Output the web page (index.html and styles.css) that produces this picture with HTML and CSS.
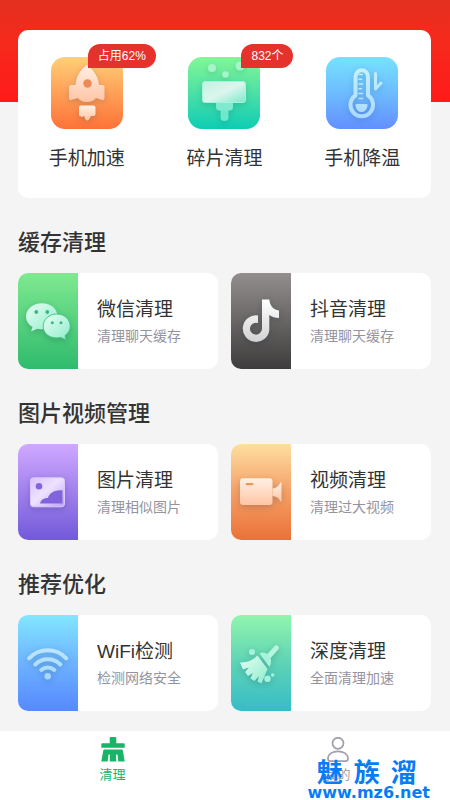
FILE: index.html
```html
<!DOCTYPE html>
<html lang="zh-CN">
<head>
<meta charset="utf-8">
<meta name="viewport" content="width=device-width, initial-scale=1">
<title>手机清理</title>
<link rel="stylesheet" href="styles.css">
</head>
<body>
<svg class="defs" width="0" height="0" aria-hidden="true">
  <defs>
    <linearGradient id="peach" x1="0" y1="0" x2="0" y2="1"><stop offset="0" stop-color="#fff1e4"/><stop offset="1" stop-color="#ffc4a5"/></linearGradient>
    <linearGradient id="mint" x1="0" y1="0" x2="1" y2="1"><stop offset="0" stop-color="#e6fff2"/><stop offset="1" stop-color="#8feccd"/></linearGradient>
    <linearGradient id="plate" x1="0" y1="0" x2="1" y2="1"><stop offset="0" stop-color="#c3f1e1"/><stop offset="0.5" stop-color="#dcf6ed"/><stop offset="1" stop-color="#7de9cc"/></linearGradient>
    <linearGradient id="silver" x1="0" y1="0" x2="0" y2="1"><stop offset="0" stop-color="#ffffff"/><stop offset="1" stop-color="#d2d2d2"/></linearGradient>
    <linearGradient id="lilac" x1="0" y1="0" x2="1" y2="1"><stop offset="0" stop-color="#d9c0ff"/><stop offset="0.45" stop-color="#eee2ff"/><stop offset="1" stop-color="#bda0fa"/></linearGradient>
    <linearGradient id="ice" gradientUnits="userSpaceOnUse" x1="0" y1="12" x2="0" y2="64"><stop offset="0" stop-color="#c6f0ff"/><stop offset="1" stop-color="#a8d8ff"/></linearGradient>
  </defs>
</svg>
<main class="page">
  <section class="tools" aria-label="快捷工具">
    <button class="tool" type="button">
      <span class="tool-icon tool-icon--speed">
        <svg viewBox="0 0 72 72" aria-hidden="true">
          <path fill="url(#peach)" d="M35.700 8C29 13 25 20 24.500 28H20Q18 28 18 30V41Q18 43.500 20 43L27 41Q30 45 35.700 45Q42 45 45 41L51 43Q53.500 43.500 53.500 41V30Q53.500 28 51.500 28H48C47.500 20 43 13 35.700 8Z"/>
          <circle cx="36.500" cy="26.500" r="4.200" fill="#ee8855"/>
          <path fill="url(#peach)" d="M29.500 48.500H42.500Q44.500 48.500 44.500 50.500V57Q44.500 59 42.500 59H40L38 62.500Q36 64.500 34.500 62.500L33 59L31 60L28 58.500V50.500Q28 48.500 29.500 48.500Z"/>
        </svg>
        <span class="badge">占用62%</span>
      </span>
      <span class="tool-name">手机加速</span>
    </button>
    <button class="tool" type="button">
      <span class="tool-icon tool-icon--debris">
        <svg viewBox="0 0 72 72" aria-hidden="true">
          <g fill="#a5f5c8"><circle cx="24" cy="11" r="4"/><circle cx="37.500" cy="17.500" r="3.300"/><circle cx="52" cy="9" r="4.500"/></g>
          <path d="M32.500 50H40.500V60.500Q40.500 64 36.500 64T32.500 60.500Z" fill="#6de8cb"/>
          <path d="M28 44H45V50Q45 53.500 41.500 53.500H31.500Q28 53.500 28 50Z" fill="#7fead0"/>
          <rect x="14.500" y="24.500" width="43" height="21" rx="2.500" fill="url(#plate)" stroke="#a5f5dc"/>
        </svg>
        <span class="badge">832个</span>
      </span>
      <span class="tool-name">碎片清理</span>
    </button>
    <button class="tool" type="button">
      <span class="tool-icon tool-icon--cool">
        <svg viewBox="0 0 72 72" aria-hidden="true">
          <g fill="none" stroke="url(#ice)" stroke-linecap="round" stroke-linejoin="round">
            <path stroke-width="4" d="M29.500 38.500V19.500A6.200 6.200 0 0 1 42 19.500V38.500A11.300 11.300 0 1 1 29.500 38.500Z"/>
            <path stroke-width="1.500" d="M33 17.500H36.500M33 22.200H35.500M33 27H36.500M33 31.800H35.500M33 36.500H36.500M33 41.500H36.500"/>
            <path stroke-width="3" d="M49.500 16.500V32L55 26"/>
          </g>
          <path fill="url(#ice)" d="M30.500 47H40.500Q42 47 41.500 49Q40 55 35.500 55T29.500 49Q29 47 30.500 47Z"/>
        </svg>
      </span>
      <span class="tool-name">手机降温</span>
    </button>
  </section>

  <section class="group">
    <h2>缓存清理</h2>
    <div class="cards">
      <button class="card" type="button">
        <span class="tile tile--wechat">
          <svg viewBox="0 0 60 96" aria-hidden="true">
            <path fill="url(#mint)" d="M24 30.300C15 30.300 8 36 8 43.500C8 48 10.300 51.500 14.500 54L13 58.500L19.500 55.800C33 58.500 39.500 51 39.500 43.500C39.500 36 33 30.300 24 30.300Z"/>
            <path fill="url(#mint)" stroke="#45ca84" d="M38.700 41C31 41 25.200 46.500 25.200 53.300C25.200 60.500 32 66.500 43 64.500L48 66.800L47 62.500C50.500 60 52.200 57 52.200 53.300C52.200 46.500 46.500 41 38.700 41Z"/>
            <g fill="#3bb68a"><circle cx="18.300" cy="39" r="1.900"/><circle cx="29.300" cy="39" r="1.900"/><circle cx="34.300" cy="49.700" r="1.500"/><circle cx="43" cy="49.700" r="1.500"/></g>
          </svg>
        </span>
        <span class="card-text"><span class="card-title">微信清理</span><span class="card-note">清理聊天缓存</span></span>
      </button>
      <button class="card" type="button">
        <span class="tile tile--douyin">
          <svg viewBox="0 0 60 96" aria-hidden="true">
            <path fill="url(#silver)" d="M31 26.500H38.300C38.800 32 42 37 48 37.500V45C44 45 41 43.800 38.300 42V57A13.300 13.300 0 1 1 27 42.500V50A6 6 0 1 0 31 56Z"/>
          </svg>
        </span>
        <span class="card-text"><span class="card-title">抖音清理</span><span class="card-note">清理聊天缓存</span></span>
      </button>
    </div>
  </section>

  <section class="group">
    <h2>图片视频管理</h2>
    <div class="cards">
      <button class="card" type="button">
        <span class="tile tile--photo">
          <svg viewBox="0 0 60 96" aria-hidden="true">
            <rect x="12.500" y="33.800" width="34" height="29" rx="3" fill="url(#lilac)" stroke="#dcc9ff"/>
            <circle cx="21" cy="42.300" r="3.300" fill="#8565de"/>
            <path fill="#8163dc" d="M22 59.500C23 55.500 26 54 30 54C31 49 37 45.500 44.500 46.300V59.500Z"/>
          </svg>
        </span>
        <span class="card-text"><span class="card-title">图片清理</span><span class="card-note">清理相似图片</span></span>
      </button>
      <button class="card" type="button">
        <span class="tile tile--video">
          <svg viewBox="0 0 60 96" aria-hidden="true">
            <rect x="9" y="34.300" width="32.500" height="26.700" rx="3" fill="url(#peach)"/>
            <path fill="url(#peach)" d="M41.500 44.500C46 44 48.500 41 49.500 38.500Q50.500 37.500 50.500 39V57Q50.500 58.500 49.500 57.500C48 54.500 46 52.500 41.500 52Z"/>
            <rect x="14.700" y="39" width="7.700" height="2.300" rx="1" fill="#ee9460"/>
          </svg>
        </span>
        <span class="card-text"><span class="card-title">视频清理</span><span class="card-note">清理过大视频</span></span>
      </button>
    </div>
  </section>

  <section class="group">
    <h2>推荐优化</h2>
    <div class="cards">
      <button class="card" type="button">
        <span class="tile tile--wifi">
          <svg viewBox="0 0 60 96" aria-hidden="true">
            <g fill="none" stroke="url(#ice)" stroke-width="4" stroke-linecap="round">
              <path d="M11 43.300C21 32.500 38.500 32.500 48.300 43.300"/>
              <path d="M17.300 49.500C24 42.500 35.500 42.500 42.300 49.500"/>
              <path d="M23.300 55C27 51.500 32.500 51.500 36.300 55"/>
            </g>
            <circle cx="29.700" cy="61.300" r="3.200" fill="#a8d8ff"/>
          </svg>
        </span>
        <span class="card-text"><span class="card-title">WiFi检测</span><span class="card-note">检测网络安全</span></span>
      </button>
      <button class="card" type="button">
        <span class="tile tile--deep">
          <svg viewBox="0 0 60 96" aria-hidden="true">
            <path d="M45.300 32.800L38 41" stroke="#b4f6df" stroke-width="5" stroke-linecap="round"/>
            <path fill="#a9f3da" d="M28.500 38.500Q34 36 38 40.500Q42 45.500 38.500 52Z"/>
            <path fill="url(#mint)" d="M26.500 40.500L36.500 54L30.500 68.500L26.500 66.500L28 61L23.500 66L19.500 63.500L21.800 58L17 61L14 57L18 52.500L12 54.500L9 47.500Q19 48 26.500 40.500Z"/>
            <g fill="#a5f2dd"><circle cx="21" cy="37" r="3"/><circle cx="36.500" cy="63.700" r="3.200"/><circle cx="41.700" cy="60" r="1.800"/></g>
          </svg>
        </span>
        <span class="card-text"><span class="card-title">深度清理</span><span class="card-note">全面清理加速</span></span>
      </button>
    </div>
  </section>
</main>

<nav class="tabs" aria-label="主导航">
  <a class="tab tab--active" href="#clean" aria-current="page">
    <svg viewBox="0 0 24 25" aria-hidden="true">
      <path fill="currentColor" d="M9.700 0H14.300Q15.300 0 15.300 1V6.300H22.700Q23.700 6.300 23.700 7.300V10.700H.3V7.300Q.3 6.300 1.300 6.300H8.700V1Q8.700 0 9.700 0ZM3.500 12.500H20.800Q21.700 12.500 21.900 13.500L23.700 24.500H17.300L16.500 17.500H15L15.300 24.500H8.700L9 17.500H7.500L6.700 24.500H.3L2.300 13.500Q2.500 12.500 3.500 12.500Z"/>
    </svg>
    <span>清理</span>
  </a>
  <a class="tab" href="#mine">
    <svg viewBox="0 0 24 25" aria-hidden="true">
      <g fill="none" stroke="currentColor" stroke-width="1.700" stroke-linecap="round"><circle cx="12" cy="6.300" r="5.500"/><path d="M4 24.200Q2 24 2 21.500C2 12 22 12 22 21.500Q22 24 20 24.200Z"/></g>
    </svg>
    <span>我的</span>
  </a>
  <div class="mark">
    <div class="mark-name"><span>魅</span><span>族</span><span>溜</span></div>
    <div class="mark-url">www.mz6.net</div>
  </div>
</nav>
</body>
</html>
```
FILE: styles.css
```css
* {
  box-sizing: border-box;
}

body {
  margin: 0;
  min-height: 100vh;
  display: flex;
  flex-direction: column;
  background: #f4f4f4;
  color: #333;
  font-family: "Liberation Sans", "Noto Sans CJK SC", sans-serif;
}

button {
  border: 0;
  padding: 0;
  color: inherit;
  background: none;
  font: inherit;
  cursor: pointer;
}

svg {
  display: block;
}

.defs {
  position: absolute;
}

.page {
  flex: 1;
  padding: 30px 19px 20px 18px;
  background: linear-gradient(#e3301f, #f52a1c 40px, #ff1a1a 102px) no-repeat 0 0 / 100% 102px;
}

.tools {
  display: grid;
  grid-template-columns: repeat(3, 1fr);
  padding: 27px 0 25px;
  border-radius: 10px;
  background: #fff;
}

.tool {
  display: flex;
  flex-direction: column;
  align-items: center;
  gap: 16px;
}

.tool-icon {
  position: relative;
  width: 72px;
  height: 72px;
  border-radius: 14px;
}

.tool-icon svg {
  filter: drop-shadow(0 2px 3px rgb(0 60 90 / 18%));
}

.tool-icon--speed {
  background: linear-gradient(#ffcf79, #ffa057 50%, #fd7237);
}

.tool-icon--debris {
  background: linear-gradient(#83f796, #4de0a6 50%, #0dcdb4);
}

.tool-icon--cool {
  background: linear-gradient(#76e2fd, #6dbcff 50%, #638fff);
}

.badge {
  position: absolute;
  top: -13px;
  right: -33px;
  padding: 0 10px;
  border-radius: 12px 12px 12px 0;
  background: #e6322c;
  color: #fff;
  font-size: 12px;
  line-height: 24px;
  white-space: nowrap;
}

.tool-name {
  font-size: 19px;
  line-height: 28px;
}

h2 {
  margin: 30px 0 15px;
  font-size: 22px;
  font-weight: 500;
  line-height: 30px;
}

.cards {
  display: grid;
  grid-template-columns: 1fr 1fr;
  gap: 13px;
}

.card {
  display: flex;
  align-items: center;
  gap: 19px;
  overflow: hidden;
  border-radius: 10px;
  background: #fff;
  text-align: left;
}

.tile {
  flex: none;
  width: 60px;
  height: 96px;
}

.tile svg {
  filter: drop-shadow(0 2px 3px rgb(0 30 60 / 20%));
}

.tile--wechat {
  background: linear-gradient(#7fe990, #2fbb6d);
}

.tile--douyin {
  background: linear-gradient(#928e8d, #3e3c3c);
}

.tile--photo {
  background: linear-gradient(#cfa8ff, #7259da);
}

.tile--video {
  background: linear-gradient(#fedea1, #f5a066 50%, #ea7239);
}

.tile--wifi {
  background: linear-gradient(#83e6ff, #6db3ff 50%, #5688ff);
}

.tile--deep {
  background: linear-gradient(#91f5ae, #5ed3b5 50%, #37bcc8);
}

.card-text {
  display: flex;
  flex-direction: column;
  gap: 2px;
}

.card-title {
  font-size: 19px;
  line-height: 28px;
}

.card-note {
  color: #9493a0;
  font-size: 14px;
  line-height: 20px;
}

.tabs {
  position: relative;
  display: grid;
  grid-template-columns: 1fr 1fr;
  height: 69px;
  background: #fff;
}

.tab {
  display: flex;
  flex-direction: column;
  align-items: center;
  gap: 4px;
  padding-top: 6px;
  color: #a09fab;
  font-size: 13px;
  line-height: 18px;
  text-decoration: none;
}

.tab svg {
  width: 24px;
  height: 25px;
}

.tab--active {
  color: #18b566;
}

.mark {
  position: absolute;
  right: 20px;
  bottom: 0;
  color: #087cf5;
  text-align: center;
  pointer-events: none;
}

.mark-name {
  display: flex;
  justify-content: center;
  gap: 11px;
  padding-right: 4px;
  font-size: 26px;
  font-weight: 700;
  line-height: 26px;
}

.mark-url {
  font-family: "DejaVu Sans", sans-serif;
  font-size: 16px;
  font-weight: 700;
  line-height: 14px;
}
```
